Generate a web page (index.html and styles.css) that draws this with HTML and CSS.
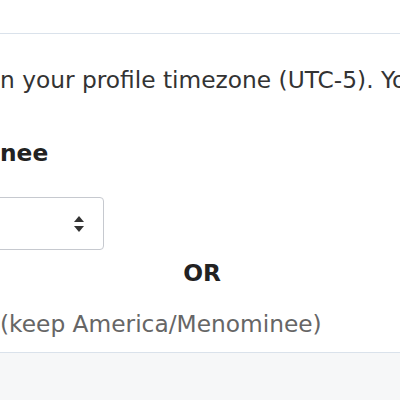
FILE: index.html
```html
<!DOCTYPE html>
<html lang="en">
<head>
  <meta charset="UTF-8">
  <meta name="viewport" content="width=device-width, initial-scale=1.0">
  <title>Timezone</title>
  <link rel="stylesheet" href="styles.css">
</head>
<body>
  <div class="modal">
    <div class="modal-header"></div>
    <div class="modal-body">
      <p class="notice">n your profile timezone (UTC-5). You</p>
      <div class="label">nee</div>
      <div class="select">
        <svg class="arrows" width="10" height="16" viewBox="0 0 10 16">
          <path d="M5 0 L10 6 L0 6 Z" fill="#333"/>
          <path d="M0 10 L10 10 L5 16 Z" fill="#333"/>
        </svg>
      </div>
      <div class="or">OR</div>
      <p class="keep">(keep America/Menominee)</p>
    </div>
    <div class="modal-footer"></div>
  </div>
</body>
</html>
```

FILE: styles.css
```css
body {
  margin: 0;
  font-family: 'DejaVu Sans', Verdana, sans-serif;
  font-size: 23.3px;
  background: #ffffff;
  overflow: hidden;
}
.modal {
  width: 400px;
  height: 400px;
  display: flex;
  flex-direction: column;
}
.modal-header {
  height: 33px;
  border-bottom: 1px solid #dae2eb;
}
.modal-body {
  padding: 29px 0 11px 0;
  border-bottom: 1px solid #dae2eb;
}
p {
  margin: 0;
}
.notice {
  line-height: 34px;
  color: #333333;
  white-space: nowrap;
  overflow: hidden;
}
.label {
  margin-top: 39px;
  line-height: 34px;
  font-weight: bold;
  color: #222222;
}
.select {
  margin-top: 27px;
  margin-left: -60px;
  width: 143px;
  height: 51px;
  border: 1px solid #c6c9cf;
  border-radius: 4px;
  display: flex;
  align-items: center;
  justify-content: flex-end;
  padding-right: 19px;
  box-sizing: content-box;
}
.arrows {
  display: block;
}
.or {
  margin-top: 6px;
  line-height: 34px;
  text-align: center;
  padding-left: 4px;
  font-weight: bold;
  color: #222222;
}
.keep {
  margin-top: 17px;
  line-height: 34px;
  color: #666666;
}
.modal-footer {
  flex: 1;
  background: #f6f7f8;
}
```
